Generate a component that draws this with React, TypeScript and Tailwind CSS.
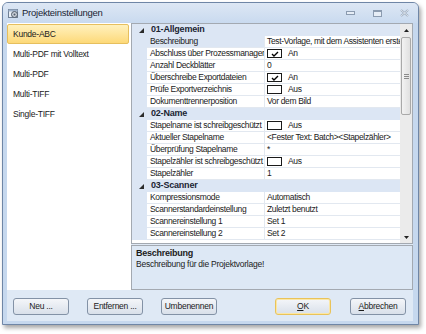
import React from 'react';

type Row = {
  cat?: boolean;
  label: string;
  value?: string;
  check?: boolean;
  selected?: boolean;
};

const rows: Row[] = [
  { cat: true, label: '01-Allgemein' },
  { label: 'Beschreibung', value: 'Test-Vorlage, mit dem Assistenten erstellt', selected: true },
  { label: 'Abschluss über Prozessmanager', check: true },
  { label: 'Anzahl Deckblätter', value: '0' },
  { label: 'Überschreibe Exportdateien', check: true },
  { label: 'Prüfe Exportverzeichnis', check: false },
  { label: 'Dokumenttrennerposition', value: 'Vor dem Bild' },
  { cat: true, label: '02-Name' },
  { label: 'Stapelname ist schreibgeschützt', check: false },
  { label: 'Aktueller Stapelname', value: '<Fester Text: Batch><Stapelzähler>' },
  { label: 'Überprüfung Stapelname', value: '*' },
  { label: 'Stapelzähler ist schreibgeschützt', check: false },
  { label: 'Stapelzähler', value: '1' },
  { cat: true, label: '03-Scanner' },
  { label: 'Kompressionsmode', value: 'Automatisch' },
  { label: 'Scannerstandardeinstellung', value: 'Zuletzt benutzt' },
  { label: 'Scannereinstellung 1', value: 'Set 1' },
  { label: 'Scannereinstellung 2', value: 'Set 2' },
];

const profiles = ['Kunde-ABC', 'Multi-PDF mit Volltext', 'Multi-PDF', 'Multi-TIFF', 'Single-TIFF'];

function CheckBox({ on }: { on: boolean }) {
  return (
    <div className="flex items-center gap-[6px]">
      <div className="w-[15px] h-[9px] border border-[#1a1a1a] bg-white flex items-center justify-center">
        {on && (
          <svg width="8" height="6" viewBox="0 0 8 6">
            <path d="M1 3 L3 5 L7 1" stroke="#000" strokeWidth="1.4" fill="none" />
          </svg>
        )}
      </div>
      <span>{on ? 'An' : 'Aus'}</span>
    </div>
  );
}

function Expander() {
  return (
    <svg width="5" height="5" viewBox="0 0 5 5">
      <polygon points="5,0 5,5 0,5" fill="#2b2b2b" />
    </svg>
  );
}

function DlgButton({ children, focused }: { children: React.ReactNode; focused?: boolean }) {
  return (
    <button
      className={
        'w-[56px] h-[17px] rounded-[3px] border text-[8.5px] text-[#1b1b1b] bg-gradient-to-b from-[#f4f6f9] to-[#d9e0ea] ' +
        (focused ? 'border-[#e9c35a] shadow-[inset_0_0_0_1px_#fbe7a6]' : 'border-[#8392a6]')
      }
    >
      {children}
    </button>
  );
}

export default function App() {
  return (
    <div className="w-[426px] h-[334px] bg-white overflow-hidden font-['Liberation_Sans',Arial,sans-serif] tracking-[-0.25px] text-[#1b1b1b]">
      <div className="ml-[2px] mt-[2px] w-[417px] h-[323px] border border-[#6f86a6] rounded-t-[6px] bg-[#c6d8ee] flex flex-col shadow-[2px_3px_4px_rgba(0,0,0,0.35)]">
        {/* title bar */}
        <div className="h-[20px] flex items-center pl-[5px] pr-[9px] bg-gradient-to-b from-[#dde7f4] to-[#c9daef] rounded-t-[5px]">
          <svg width="11" height="11" viewBox="0 0 11 11" className="mr-[3px]">
            <rect x="0.5" y="1.5" width="9" height="8" fill="#e8eef6" stroke="#6f7f94" />
            <rect x="0.5" y="1.5" width="9" height="2" fill="#9fb3cc" />
            <circle cx="6.5" cy="6.5" r="3" fill="#c8ced6" stroke="#4f5b6a" strokeWidth="1" />
            <circle cx="6.5" cy="6.5" r="1" fill="#4f5b6a" />
          </svg>
          <span className="text-[9.5px] text-[#1a2433]">Projekteinstellungen</span>
          <div className="flex-1" />
          <div className="flex items-center gap-[18px]">
            <div className="w-[9px] h-[4px] border border-[#8b9bb0] bg-[#e6edf6]" />
            <div className="w-[9px] h-[7px] border border-[#8b9bb0] border-t-2 bg-[#e6edf6]" />
            <svg width="9" height="8" viewBox="0 0 9 8">
              <path d="M1 1 L8 7 M8 1 L1 7" stroke="#9aa8ba" strokeWidth="2" />
              <path d="M1 1 L8 7 M8 1 L1 7" stroke="#eef3f9" strokeWidth="0.8" />
            </svg>
          </div>
        </div>

        {/* client */}
        <div className="ml-[4px] mr-[5px] mb-[3px] flex-1 bg-[#dfe9f5] flex flex-col">
          <div className="flex h-[267px]">
            {/* profile list */}
            <div className="w-[124px] bg-white pt-[1px] flex flex-col">
              {profiles.map((p, i) => (
                <div
                  key={p}
                  className={
                    'h-[20px] flex items-center pl-[5px] text-[8.5px] rounded-[2px] mr-[2px] ' +
                    (i === 0 ? 'bg-gradient-to-b from-[#fff1bd] to-[#fdd978] border border-[#e6bf5e]' : 'border border-transparent')
                  }
                >
                  {p}
                </div>
              ))}
            </div>

            {/* right column */}
            <div className="flex-1 flex flex-col">
              <div className="h-[221px] border border-[#a3a9b1] bg-white flex tracking-[-0.35px]">
                <div className="w-[268px] flex flex-col">
                  {rows.map((r, i) =>
                    r.cat ? (
                      <div key={i} className="h-[12px] bg-[#dce6f4] flex items-center">
                        <div className="w-[15px] flex justify-end pr-[3px]">
                          <Expander />
                        </div>
                        <span className="pl-[4px] text-[9px] font-bold text-[#1b2433] tracking-[-0.2px]">{r.label}</span>
                      </div>
                    ) : (
                      <div key={i} className="h-[12px] flex text-[8.5px]">
                        <div className="w-[15px] bg-[#dce6f4]" />
                        <div
                          className={
                            'w-[118px] border-b border-r border-[#e2e8f0] pl-[3px] flex items-center overflow-hidden whitespace-nowrap ' +
                            (r.selected ? 'bg-[#dce6f4]' : 'bg-white')
                          }
                        >
                          {r.label}
                        </div>
                        <div className="flex-1 border-b border-[#e2e8f0] pl-[2px] flex items-center overflow-hidden whitespace-nowrap">
                          {r.check !== undefined ? <CheckBox on={r.check} /> : r.value}
                        </div>
                      </div>
                    )
                  )}
                </div>

                {/* scrollbar */}
                <div className="w-[12px] ml-auto bg-[#ebebeb] flex flex-col">
                  <div className="h-[12px] flex items-center justify-center">
                    <svg width="5" height="3" viewBox="0 0 5 3">
                      <polygon points="2.5,0 5,3 0,3" fill="#222" />
                    </svg>
                  </div>
                  <div className="h-[78px] mx-[1px] mt-[1px] rounded-[2px] border border-[#a9a9a9] bg-gradient-to-r from-[#f3f3f3] to-[#e0e0e0] flex flex-col items-center justify-center gap-[1px]">
                    <div className="w-[5px] h-px bg-[#8a8a8a]" />
                    <div className="w-[5px] h-px bg-[#8a8a8a]" />
                    <div className="w-[5px] h-px bg-[#8a8a8a]" />
                  </div>
                  <div className="flex-1" />
                  <div className="h-[12px] flex items-center justify-center">
                    <svg width="5" height="3" viewBox="0 0 5 3">
                      <polygon points="0,0 5,0 2.5,3" fill="#222" />
                    </svg>
                  </div>
                </div>
              </div>

              <div className="mt-[1px] h-[45px] border border-[#a3a9b1] bg-[#dde8f5] pl-[4px] pt-[2px] text-[8.5px]">
                <div className="font-bold text-[9px] leading-[11px]">Beschreibung</div>
                <div className="leading-[11px]">Beschreibung für die Projektvorlage!</div>
              </div>
            </div>
          </div>

          {/* buttons */}
          <div className="flex-1 flex items-start pt-[8px] pl-[6px] pr-[7px]">
            <div className="flex gap-[18px]">
              <DlgButton>Neu ...</DlgButton>
              <DlgButton>Entfernen ...</DlgButton>
              <DlgButton>Umbenennen</DlgButton>
            </div>
            <div className="flex-1" />
            <div className="flex gap-[19px]">
              <DlgButton focused>
                <span className="underline">O</span>K
              </DlgButton>
              <DlgButton>
                <span className="underline">A</span>bbrechen
              </DlgButton>
            </div>
          </div>
        </div>
      </div>
    </div>
  );
}
